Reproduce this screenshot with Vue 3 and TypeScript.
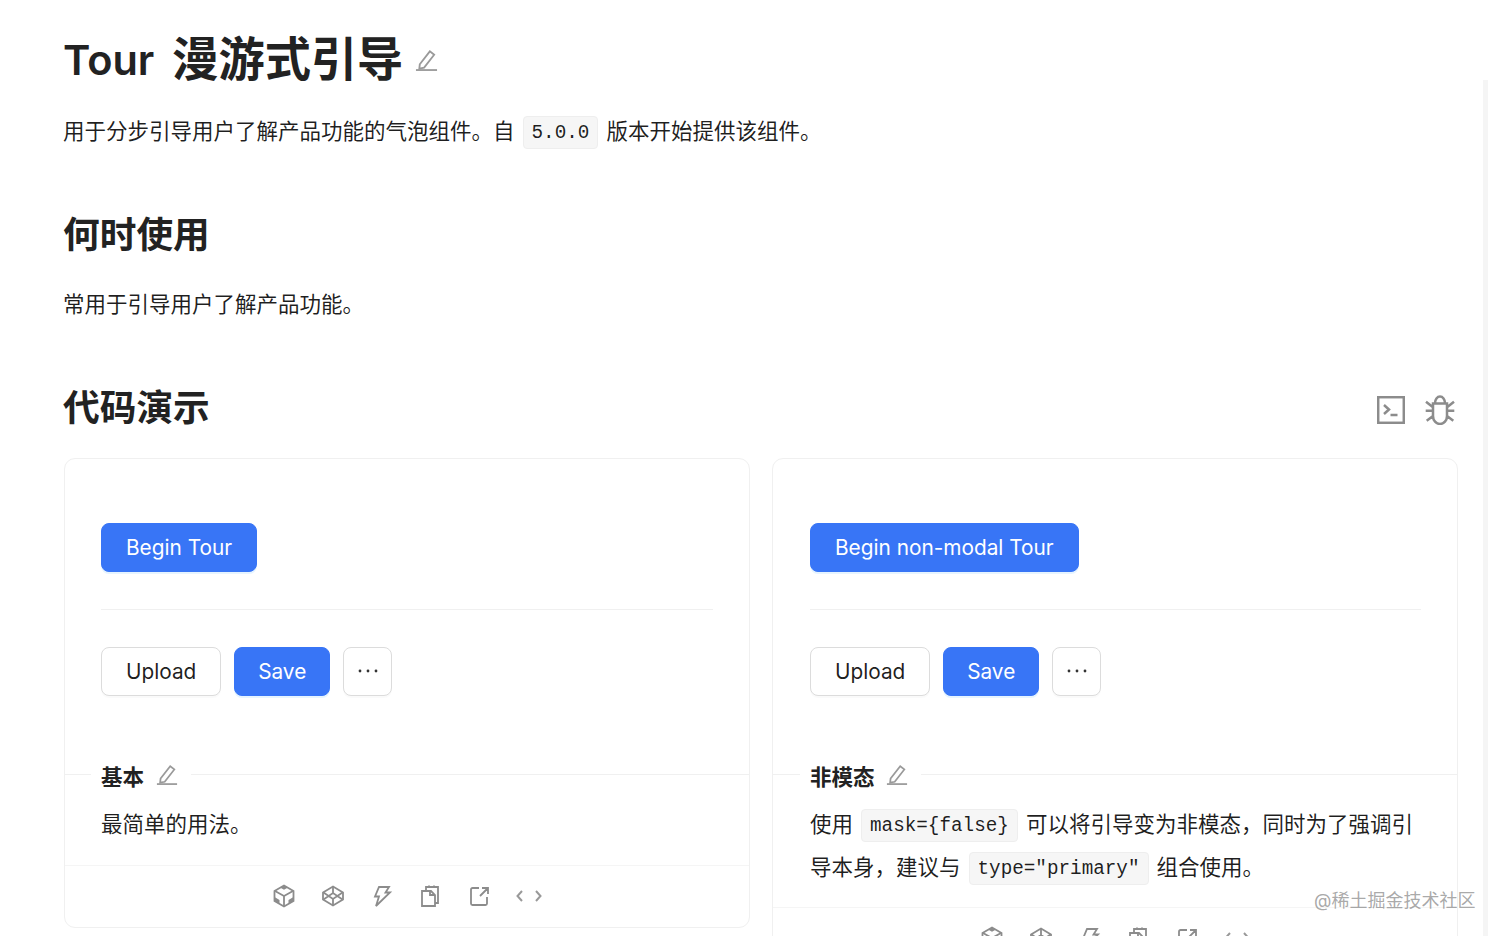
<script setup lang="ts">
interface Card { title: string; primary: string; wide: boolean }
const cards: Card[] = [
  { title: '基本', primary: 'Begin Tour', wide: false },
  { title: '非模态', primary: 'Begin non-modal Tour', wide: true },
]
</script>

<template>
  <div class="page">
    <main class="content">
      <h1 class="title">
        <span class="title-en">Tour</span><span class="title-cn">漫游式引导</span>
        <svg class="edit edit-lg" viewBox="0 0 24 24"><path d="M5 17 15.500 3.500l4.500 3.500L9.500 20.500 4.500 21.500z"/><path d="M1 23h22"/></svg>
      </h1>
      <p class="desc">用于分步引导用户了解产品功能的气泡组件。自<code class="code ver">5.0.0</code>版本开始提供该组件。</p>
      <h2 class="h2 first">何时使用</h2>
      <p class="when">常用于引导用户了解产品功能。</p>
      <div class="demo-head">
        <h2 class="h2">代码演示</h2>
        <div class="head-icons">
          <svg class="term" viewBox="0 0 28 28"><rect x="1.200" y="1.200" width="25.600" height="25.600"/><path d="M7 9l5 4.500-5 4.500M13.500 19h7"/></svg>
          <svg class="bug" viewBox="0 0 30 30"><path d="M8 8.500h14V21a7 8 0 0 1-14 0zM10 8a5 6.500 0 0 1 10 0M.7 15.700h7M22.300 15.700h7M1 6.700l7 5.600M29 6.700l-7 5.600M1.700 25.700 8 21M28.300 25.700 22 21"/></svg>
        </div>
      </div>
      <div class="grid">
        <section v-for="c in cards" :key="c.title" class="card">
          <div class="preview">
            <button class="btn primary">{{ c.primary }}</button>
            <div class="divider"></div>
            <div class="row">
              <button class="btn">Upload</button>
              <button class="btn primary">Save</button>
              <button class="btn more" aria-label="more">
                <svg class="dots" viewBox="0 0 22 6"><circle cx="3" cy="3" r="1.400"/><circle cx="11" cy="3" r="1.400"/><circle cx="19" cy="3" r="1.400"/></svg>
              </button>
            </div>
          </div>
          <div class="meta-title">
            <span class="meta-name">{{ c.title }}</span>
            <svg class="edit edit-sm" viewBox="0 0 24 24"><path d="M5 17 15.500 3.500l4.500 3.500L9.500 20.500 4.500 21.500z"/><path d="M1 23h22"/></svg>
          </div>
          <p v-if="!c.wide" class="meta-desc">最简单的用法。</p>
          <p v-else class="meta-desc">使用<code class="code">mask={false}</code>可以将引导变为非模态，同时为了强调引导本身，建议与<code class="code">type="primary"</code>组合使用。</p>
          <div class="actions">
            <svg viewBox="0 0 24 24"><path d="M12 1.500 21.500 7v10L12 22.500 2.500 17V7z"/><path d="M3 7l9 5 9-5M12 12v10"/><path class="fill" d="M2.500 13l5 3v4l-5-3zM21.500 13l-5 3v4l5-3zM8 3.500 12 1.500l4 2-4 2.300z"/></svg>
            <svg viewBox="0 0 24 24"><path d="M12 2.500 22 8.500v7L12 21.500 2 15.500v-7z"/><path d="M2.500 8.500 12 15l9.500-6.500M2.500 15.500 12 9l9.500 6.500M12 2.500V9M12 15v6.500"/></svg>
            <svg viewBox="0 0 24 24"><path d="M9 3h10l-3.500 5.500H20L6 22l3-9.500H5z"/></svg>
            <svg viewBox="0 0 24 24"><path d="M4 7h9l4 4v11H4z"/><path d="M8 7V3h12v16h-3M12 7v4h5M11 1.500V4M16 1.500V4"/></svg>
            <svg viewBox="0 0 24 24"><path d="M12 4H5.500A1.500 1.500 0 0 0 4 5.500v14A1.500 1.500 0 0 0 5.500 21h13a1.500 1.500 0 0 0 1.500-1.500V13M13 12l7-7M15 4h6v6"/></svg>
            <svg class="code-ic" viewBox="0 0 26 12"><path d="M6 1 1.500 6 6 11M20 1l4.500 5-4.500 5"/></svg>
          </div>
        </section>
      </div>
    </main>
    <div class="rail"></div>
    <div class="watermark">@稀土掘金技术社区</div>
  </div>
</template>

<style scoped>
.page {
  position: relative;
  width: 1500px;
  height: 936px;
  overflow: hidden;
  background: #fff;
  color: rgba(0, 0, 0, 0.88);
  font-family: Inter, "Noto Sans CJK SC", sans-serif;
  font-size: 21.500px;
}
.content { width: 1394px; margin-left: 64px; }
.title {
  display: flex;
  align-items: center;
  margin: 0 0 0 -1px;
  padding-top: 28px;
  height: 64px;
  font-size: 46.200px;
  font-weight: 600;
  line-height: 64px;
  color: #222;
}
.title-en { font-size: 41.500px; }
.title-cn { margin-left: 18px; margin-top: -2px; }
.edit { fill: none; stroke: #9a9a9a; stroke-width: 1.900; }
.edit-lg { width: 23px; height: 23px; margin-left: 12px; margin-top: -2px; }
.edit-sm { width: 22px; height: 22px; margin-top: -2px; }
.desc { margin: 15px 0 0 -1px; height: 48px; line-height: 48px; white-space: nowrap; }
.code {
  display: inline-block;
  box-sizing: border-box;
  height: 33px;
  margin: 0 8px;
  padding: 0 8px;
  border: 1px solid #eeeeee;
  border-radius: 4px;
  background: #f6f6f6;
  font-family: "Liberation Mono", monospace;
  font-size: 19.300px;
  line-height: 32px;
  vertical-align: 1px;
}
.ver { margin: 0 8px; }
.h2 {
  margin: 0 0 0 -1px;
  font-size: 36.700px;
  font-weight: 600;
  line-height: 50px;
  color: #222;
}
.first { margin-top: 55px; }
.when { margin: 26px 0 0 -1px; line-height: 36px; }
.demo-head {
  display: flex;
  justify-content: space-between;
  align-items: center;
  margin-top: 61px;
}
.head-icons { display: flex; align-items: center; gap: 20px; margin-top: 4px; margin-right: 3px; }
.term, .bug { fill: none; stroke: #8c8c8c; stroke-width: 2.500; }
.term { width: 28px; height: 28px; }
.bug { width: 30px; height: 30px; }
.grid {
  display: grid;
  grid-template-columns: 686px 686px;
  gap: 22px;
  margin-top: 25px;
  align-items: start;
}
.card {
  box-sizing: border-box;
  height: 470px;
  border: 1px solid #f0f0f0;
  border-radius: 11px;
}
.card:nth-child(2) { height: 520px; }
.preview { padding: 64px 36px 0; height: 288px; box-sizing: border-box; }
.card:nth-child(2) .preview, .card:nth-child(2) .meta-title, .card:nth-child(2) .meta-desc { padding-left: 37px; }
.btn {
  box-sizing: border-box;
  height: 49px;
  padding: 0 24px;
  border: 1.500px solid #dcdcdc;
  border-radius: 8px;
  background: #fff;
  color: rgba(0, 0, 0, 0.88);
  font: 20.800px Inter, "Noto Sans CJK SC", sans-serif;
  box-shadow: 0 2px 0 rgba(0, 0, 0, 0.02);
}
.primary { background: #3875f6; border-color: #3875f6; color: #fff; box-shadow: 0 2px 0 rgba(5, 145, 255, 0.1); }
.row .primary { padding: 0 23px; }
.more { display: flex; align-items: center; justify-content: center; width: 49px; padding: 0 0 2px; }
.dots { width: 22px; height: 6px; fill: #333; }
.divider { height: 1px; background: #f0f0f0; margin: 37px 0; }
.row { display: flex; gap: 12.800px; }
.meta-title {
  display: flex;
  align-items: center;
  gap: 12px;
  height: 26px;
  margin-top: 15px;
  padding: 0 36px;
  font-size: 21.500px;
  font-weight: 600;
  color: #222;
  position: relative;
}
.card:nth-child(2) .meta-title { gap: 11px; }
.meta-title::before, .meta-title::after {
  content: "";
  position: absolute;
  top: 12px;
  height: 1px;
  background: #f0f0f0;
}
.meta-title::before { left: 0; width: 26px; }
.meta-title::after { left: 126px; right: 0; }
.card:nth-child(2) .meta-title::before { width: 27px; }
.card:nth-child(2) .meta-title::after { left: 148px; }
.meta-desc {
  margin: 15px 0 0;
  padding: 0 36px;
  line-height: 43px;
  height: 62px;
}
.card:nth-child(2) .meta-desc { height: 104px; }
.actions {
  display: flex;
  justify-content: center;
  align-items: center;
  gap: 24.700px;
  height: 60px;
  border-top: 1px solid #f5f5f5;
}
.actions svg { width: 24px; height: 24px; fill: none; stroke: #8c8c8c; stroke-width: 1.800; }
.actions .fill { fill: #8c8c8c; stroke: none; }
.actions .code-ic { width: 26px; height: 12px; stroke: #999; stroke-width: 2; }
.rail {
  position: absolute;
  left: 1483px;
  top: 80px;
  bottom: 0;
  width: 5px;
  background: #f5f5f5;
}
.watermark {
  position: absolute;
  left: 1314px;
  top: 888px;
  font-size: 18px;
  line-height: 26px;
  color: rgba(120, 120, 120, 0.65);
  white-space: nowrap;
}
</style>

<style>
html, body { margin: 0; overflow: hidden; background: #fff; }
</style>
